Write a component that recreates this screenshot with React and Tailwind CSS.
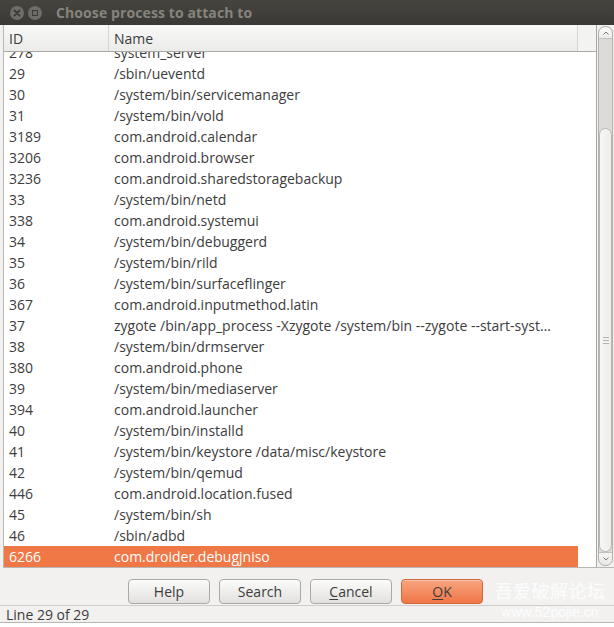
import React from "react";

const rows = [
  ["278", "system_server"],
  ["29", "/sbin/ueventd"],
  ["30", "/system/bin/servicemanager"],
  ["31", "/system/bin/vold"],
  ["3189", "com.android.calendar"],
  ["3206", "com.android.browser"],
  ["3236", "com.android.sharedstoragebackup"],
  ["33", "/system/bin/netd"],
  ["338", "com.android.systemui"],
  ["34", "/system/bin/debuggerd"],
  ["35", "/system/bin/rild"],
  ["36", "/system/bin/surfaceflinger"],
  ["367", "com.android.inputmethod.latin"],
  ["37", "zygote /bin/app_process -Xzygote /system/bin --zygote --start-syst…"],
  ["38", "/system/bin/drmserver"],
  ["380", "com.android.phone"],
  ["39", "/system/bin/mediaserver"],
  ["394", "com.android.launcher"],
  ["40", "/system/bin/installd"],
  ["41", "/system/bin/keystore /data/misc/keystore"],
  ["42", "/system/bin/qemud"],
  ["446", "com.android.location.fused"],
  ["45", "/system/bin/sh"],
  ["46", "/sbin/adbd"],
  ["6266", "com.droider.debugjniso"],
];

function Btn({ children, primary }) {
  return (
    <button
      className={
        primary
          ? "w-[82px] h-[25px] rounded-[4px] border border-[#d0683c] bg-gradient-to-b from-[#f7a47f] to-[#ef7645] text-[14px] text-[#3c3c3c] shadow-[inset_0_1px_0_rgba(255,255,255,0.35)]"
          : "w-[82px] h-[25px] rounded-[4px] border border-[#a9a9a7] bg-gradient-to-b from-[#fbfbfa] to-[#e2e1df] text-[14px] text-[#3c3c3c] shadow-[inset_0_1px_0_rgba(255,255,255,0.8)]"
      }
    >
      {children}
    </button>
  );
}

export default function App() {
  return (
    <div
      className="w-[614px] h-[627px] overflow-hidden bg-[#f2f1f0] flex flex-col relative text-[#3c3c3c]"
      style={{ fontFamily: '"Open Sans", "Noto Sans", "Noto Sans CJK SC", sans-serif' }}
    >
      {/* Title bar */}
      <div className="h-[25px] shrink-0 bg-gradient-to-b from-[#45443f] to-[#3a3935] flex items-center">
        <div className="ml-[10px] w-[14px] h-[14px] rounded-full bg-[#6e6d68] flex items-center justify-center">
          <svg width="8" height="8" viewBox="0 0 8 8">
            <path d="M1.5 1.5 L6.5 6.5 M6.5 1.5 L1.5 6.5" stroke="#3c3b37" strokeWidth="1.8" strokeLinecap="round" />
          </svg>
        </div>
        <div className="ml-[4px] w-[14px] h-[14px] rounded-full bg-[#6e6d68] flex items-center justify-center">
          <div className="w-[6px] h-[6px] border-[1.5px] border-[#3c3b37]" />
        </div>
        <div className="ml-[14px] text-[14px] font-bold text-[#86847d] leading-none tracking-[0.1px]">
          Choose process to attach to
        </div>
      </div>

      {/* List area */}
      <div className="h-[543px] shrink-0 flex pl-[3px]">
        <div className="flex-1 flex flex-col border-l border-b border-[#b8b7b4] bg-white min-w-0">
          {/* header */}
          <div className="h-[27px] shrink-0 flex border-b border-[#a9a8a5] bg-gradient-to-b from-[#f8f8f7] to-[#ebebea]">
            <div className="w-[105px] border-r border-[#d6d5d3] pl-[5px] text-[14px] leading-[27px]">ID</div>
            <div className="w-[469px] border-r border-[#d6d5d3] pl-[5px] text-[14px] leading-[27px]">Name</div>
            <div className="flex-1 bg-[#f3f3f2]" />
          </div>
          {/* rows */}
          <div className="flex-1 overflow-hidden">
            <div className="-mt-[10px]">
              {rows.map(([id, name], i) => {
                const sel = i === rows.length - 1;
                return (
                  <div key={id} className="flex h-[21px]">
                    <div
                      className={
                        "flex w-[574px] text-[14px] leading-[21px] " +
                        (sel ? "bg-[#f07746] text-white" : "")
                      }
                    >
                      <div className="w-[105px] pl-[5px]">{id}</div>
                      <div className="w-[469px] pl-[5px] whitespace-nowrap overflow-hidden">{name}</div>
                    </div>
                  </div>
                );
              })}
            </div>
          </div>
        </div>
        {/* scrollbar */}
        <div className="w-[18px] shrink-0 border-l border-[#a9a8a5] border-b border-b-[#b8b7b4] bg-[#f2f1f0] pl-[1px] pr-[1px] pt-[1px] pb-[1px] flex flex-col">
          <div className="flex-1 rounded-[7px] border border-[#b3b2af] bg-[#dcdbd9] flex flex-col overflow-hidden">
            <div className="h-[12px] shrink-0 bg-gradient-to-b from-[#fbfbfb] to-[#ececeb] border-b border-[#c3c2bf] flex items-center justify-center rounded-t-[7px]">
              <svg width="6" height="4" viewBox="0 0 6 4">
                <path d="M0.5 3.5 L3 1 L5.5 3.5" fill="none" stroke="#7a7a78" strokeWidth="1" />
              </svg>
            </div>
            <div className="h-[89px] shrink-0" />
            <div className="flex-1 rounded-[7px] border border-[#b9b8b5] bg-gradient-to-r from-[#f7f7f6] to-[#ededec] flex items-center justify-center">
              <svg width="6" height="7" viewBox="0 0 6 7">
                <path d="M0 0.5 H6 M0 3.5 H6 M0 6.5 H6" stroke="#b5b4b1" strokeWidth="1" />
              </svg>
            </div>
            <div className="h-[13px] shrink-0 bg-gradient-to-b from-[#f4f4f3] to-[#e9e9e8] border-t border-[#c3c2bf] flex items-center justify-center rounded-b-[7px]">
              <svg width="6" height="4" viewBox="0 0 6 4">
                <path d="M0.5 0.5 L3 3 L5.5 0.5" fill="none" stroke="#7a7a78" strokeWidth="1" />
              </svg>
            </div>
          </div>
        </div>
      </div>

      {/* Buttons */}
      <div className="h-[37px] shrink-0 flex items-start pt-[11px] pl-[128px] gap-[9px]">
        <Btn>Help</Btn>
        <Btn>Search</Btn>
        <Btn>
          <span className="underline underline-offset-2">C</span>ancel
        </Btn>
        <Btn primary>
          <span className="underline underline-offset-2">O</span>K
        </Btn>
      </div>

      {/* Status bar */}
      <div className="h-[17px] shrink-0 border-t border-[#cfcecb] flex items-center pl-[6px] pt-[1px] text-[14px] leading-none text-[#3c3c3c]">
        Line 29 of 29
      </div>
      <div className="flex-1 bg-white border-t border-[#b8b7b4]" />

      {/* Watermark overlay */}
      <div className="absolute left-[494px] top-[580px] w-[112px] flex flex-col items-center pointer-events-none">
        <div className="text-[18px] leading-[20px] text-white/80 tracking-[0.5px]" style={{ fontFamily: '"Noto Sans CJK SC", sans-serif' }}>
          吾爱破解论坛
        </div>
        <div className="text-[14px] leading-[18px] text-white/80 mt-[3px]" style={{ fontFamily: '"Liberation Sans", sans-serif' }}>
          www.52pojie.cn
        </div>
      </div>
    </div>
  );
}
